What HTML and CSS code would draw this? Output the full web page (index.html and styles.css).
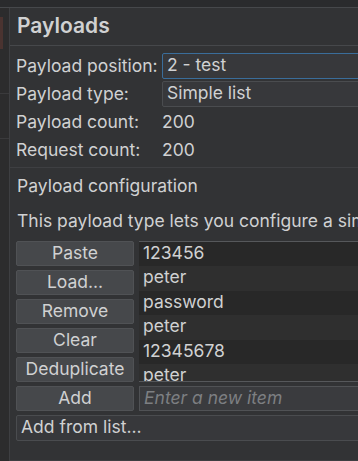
FILE: index.html
```html
<!DOCTYPE html>
<html lang="en">
<head>
    <meta charset="UTF-8">
    <title>Payloads</title>
    <link rel="stylesheet" href="styles.css">
</head>
<body>
    <div class="topbar"></div>
    <div class="main">
        <div class="sidebar">
            <div class="side-mark"></div>
            <div class="side-row"></div>
            <div class="side-row"></div>
        </div>

        <div class="panel">
            <h1 class="panel-title">Payloads</h1>

            <div class="settings">
                <div class="setting">
                    <span class="label">Payload position:</span>
                    <div class="combo focused">2 - test</div>
                </div>
                <div class="setting">
                    <span class="label">Payload type:</span>
                    <div class="combo">Simple list</div>
                </div>
                <div class="setting">
                    <span class="label">Payload count:</span>
                    <span class="value">200</span>
                </div>
                <div class="setting">
                    <span class="label">Request count:</span>
                    <span class="value">200</span>
                </div>
            </div>

            <div class="config">
                <h2 class="config-title">Payload configuration</h2>
                <p class="config-desc">This payload type lets you configure a simple list</p>

                <div class="list-editor">
                    <div class="buttons">
                        <button>Paste</button>
                        <button>Load...</button>
                        <button>Remove</button>
                        <button>Clear</button>
                        <button>Deduplicate</button>
                    </div>
                    <ul class="items">
                        <li>123456</li>
                        <li>peter</li>
                        <li>password</li>
                        <li>peter</li>
                        <li>12345678</li>
                        <li>peter</li>
                    </ul>

                    <button>Add</button>
                    <input class="new-item" type="text" placeholder="Enter a new item">

                    <div class="from-list">Add from list...</div>
                </div>
            </div>
        </div>
    </div>
</body>
</html>
```

FILE: styles.css
```css
:root {
    --bg: #323335;
    --dark: #2a2b2d;
    --line: #46484b;
    --text: #d0d1d2;
    --button: #46484b;
    --row-a: #282828;
    --row-b: #2f2f2f;
    --focus: #3a6d9a;
}

* {
    box-sizing: border-box;
    margin: 0;
    padding: 0;
}

body {
    font-family: Inter, 'Noto Sans', sans-serif;
    font-size: 17.5px;
    line-height: 20px;
    color: var(--text);
    background: var(--bg);
    height: 461px;
    overflow: hidden;
}

.topbar {
    height: 8px;
    background: var(--dark);
    border-bottom: 1px solid var(--line);
}

.main {
    display: flex;
    height: 453px;
}

.sidebar {
    width: 10px;
    background: #2c2c2d;
    border-right: 1px solid #3e3f42;
    padding-top: 9px;
}

.side-mark {
    width: 3px;
    height: 32px;
    background: #4a3330;
}

.side-row {
    height: 45px;
    border-bottom: 1px solid #3a3a3c;
}

.panel {
    flex: 1;
    min-width: 0;
    overflow: hidden;
    border-bottom: 1px solid #3e3f42;
}

.panel-title {
    font-size: 21px;
    font-weight: 600;
    line-height: 24px;
    padding: 6px 7px 0;
    height: 38px;
    border-bottom: 1px solid var(--line);
}

.settings {
    padding: 7px 0 4px 6px;
    border-bottom: 1px solid #3e3f42;
    display: flex;
    flex-direction: column;
    gap: 2px;
}

.setting {
    display: flex;
    align-items: center;
    height: 26px;
    white-space: nowrap;
}

.label {
    width: 146px;
    flex-shrink: 0;
}

.combo {
    flex: 1;
    height: 100%;
    margin-right: -20px;
    padding: 0 4px 2px;
    background: #37383b;
    border: 1px solid #4a4c4f;
    border-radius: 2px;
    display: flex;
    align-items: center;
}

.combo.focused {
    border-color: var(--focus);
}

.config {
    padding: 8px 0 0 7px;
}

.config-title {
    font-size: 17.5px;
    font-weight: normal;
    height: 20px;
}

.config-desc {
    white-space: nowrap;
    margin: 15px 0 10px;
}

.list-editor {
    display: grid;
    grid-template-columns: 118px 1fr;
    column-gap: 5px;
    row-gap: 4px;
    margin-left: -1px;
    margin-right: -20px;
}

.buttons {
    display: flex;
    flex-direction: column;
    gap: 4px;
}

button {
    font: inherit;
    color: var(--text);
    background: var(--button);
    border: 1px solid #505255;
    border-radius: 2px;
    height: 25px;
    padding-bottom: 1px;
}

.items {
    list-style: none;
    height: 141px;
    overflow: hidden;
    background: var(--row-a);
    border-top: 1px solid #56585b;
    border-bottom: 1px solid #56585b;
}

.items li {
    height: 24.4px;
    padding-left: 4px;
    line-height: 22px;
    background: var(--row-a);
}

.items li:nth-child(even) {
    background: var(--row-b);
}

.new-item {
    font: inherit;
    color: var(--text);
    background: #3a3b3e;
    border: 1px solid #505255;
    height: 25px;
    padding: 0 4px 2px;
    outline: none;
}

.new-item::placeholder {
    color: #7d7f82;
    font-style: italic;
}

.from-list {
    grid-column: 1 / 3;
    height: 26px;
    padding: 0 4px 2px;
    display: flex;
    align-items: center;
    background: #37383b;
    border: 1px solid #4a4c4f;
    border-radius: 2px;
}
```
